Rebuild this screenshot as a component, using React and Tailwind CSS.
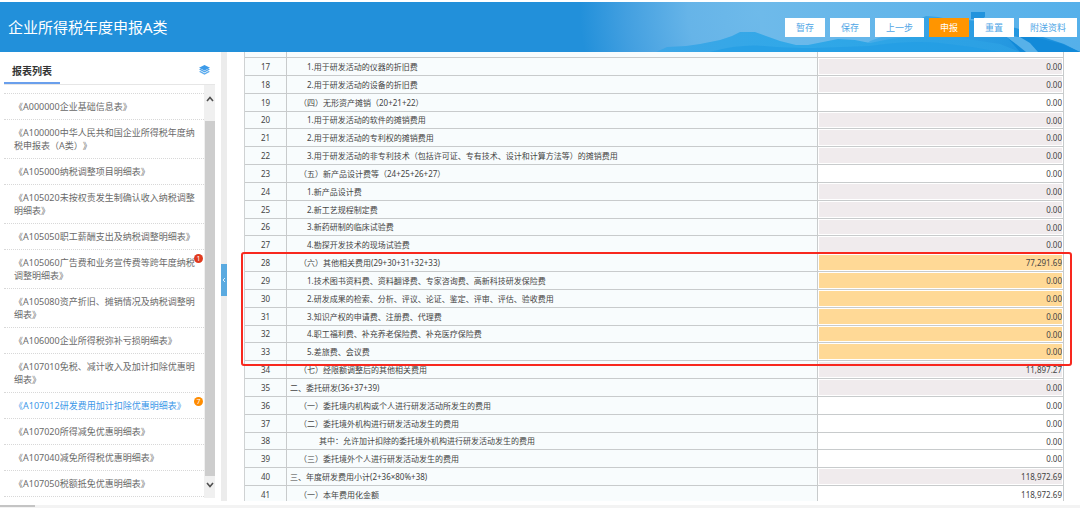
import React, { useState } from 'react';

const actions = [
  { label: '暂存' },
  { label: '保存' },
  { label: '上一步' },
  { label: '申报', primary: true },
  { label: '重置' },
  { label: '附送资料' },
];

const reports = [
  { code: 'A000000', name: '企业基础信息表' },
  { code: 'A100000', name: '中华人民共和国企业所得税年度纳税申报表（A类）' },
  { code: 'A105000', name: '纳税调整项目明细表' },
  { code: 'A105020', name: '未按权责发生制确认收入纳税调整明细表' },
  { code: 'A105050', name: '职工薪酬支出及纳税调整明细表' },
  { code: 'A105060', name: '广告费和业务宣传费等跨年度纳税调整明细表', badge: 1, badgeColor: 'bg-[#e03a1e]' },
  { code: 'A105080', name: '资产折旧、摊销情况及纳税调整明细表' },
  { code: 'A106000', name: '企业所得税弥补亏损明细表' },
  { code: 'A107010', name: '免税、减计收入及加计扣除优惠明细表' },
  { code: 'A107012', name: '研发费用加计扣除优惠明细表', badge: 7, badgeColor: 'bg-[#ff8c00]' },
  { code: 'A107020', name: '所得减免优惠明细表' },
  { code: 'A107040', name: '减免所得税优惠明细表' },
  { code: 'A107050', name: '税额抵免优惠明细表' },
];

// kind: locked = calculated, open = editable, marked = highlighted
const rows = [
  { no: 17, level: 2, name: '1.用于研发活动的仪器的折旧费', value: '0.00', kind: 'locked' },
  { no: 18, level: 2, name: '2.用于研发活动的设备的折旧费', value: '0.00', kind: 'locked' },
  { no: 19, level: 1, name: '（四）无形资产摊销（20+21+22）', value: '0.00', kind: 'open' },
  { no: 20, level: 2, name: '1.用于研发活动的软件的摊销费用', value: '0.00', kind: 'locked' },
  { no: 21, level: 2, name: '2.用于研发活动的专利权的摊销费用', value: '0.00', kind: 'locked' },
  { no: 22, level: 2, name: '3.用于研发活动的非专利技术（包括许可证、专有技术、设计和计算方法等）的摊销费用', value: '0.00', kind: 'locked' },
  { no: 23, level: 1, name: '（五）新产品设计费等（24+25+26+27）', value: '0.00', kind: 'open' },
  { no: 24, level: 2, name: '1.新产品设计费', value: '0.00', kind: 'locked' },
  { no: 25, level: 2, name: '2.新工艺规程制定费', value: '0.00', kind: 'locked' },
  { no: 26, level: 2, name: '3.新药研制的临床试验费', value: '0.00', kind: 'locked' },
  { no: 27, level: 2, name: '4.勘探开发技术的现场试验费', value: '0.00', kind: 'locked' },
  { no: 28, level: 1, name: '（六）其他相关费用(29+30+31+32+33)', value: '77,291.69', kind: 'marked' },
  { no: 29, level: 2, name: '1.技术图书资料费、资料翻译费、专家咨询费、高新科技研发保险费', value: '0.00', kind: 'marked' },
  { no: 30, level: 2, name: '2.研发成果的检索、分析、评议、论证、鉴定、评审、评估、验收费用', value: '0.00', kind: 'marked' },
  { no: 31, level: 2, name: '3.知识产权的申请费、注册费、代理费', value: '0.00', kind: 'marked' },
  { no: 32, level: 2, name: '4.职工福利费、补充养老保险费、补充医疗保险费', value: '0.00', kind: 'marked' },
  { no: 33, level: 2, name: '5.差旅费、会议费', value: '0.00', kind: 'marked' },
  { no: 34, level: 1, name: '（七）经限额调整后的其他相关费用', value: '11,897.27', kind: 'locked' },
  { no: 35, level: 0, name: '二、委托研发(36+37+39)', value: '0.00', kind: 'locked' },
  { no: 36, level: 1, name: '（一）委托境内机构或个人进行研发活动所发生的费用', value: '0.00', kind: 'open' },
  { no: 37, level: 1, name: '（二）委托境外机构进行研发活动发生的费用', value: '0.00', kind: 'open' },
  { no: 38, level: 3, name: '其中：允许加计扣除的委托境外机构进行研发活动发生的费用', value: '0.00', kind: 'open' },
  { no: 39, level: 1, name: '（三）委托境外个人进行研发活动发生的费用', value: '0.00', kind: 'open' },
  { no: 40, level: 0, name: '三、年度研发费用小计(2+36×80%+38)', value: '118,972.69', kind: 'locked' },
  { no: 41, level: 1, name: '（一）本年费用化金额', value: '118,972.69', kind: 'open' },
];

const indent = ['pl-[3px]', 'pl-3', 'pl-5', 'pl-8'];

const kindColor = {
  locked: 'bg-[#f0ebed]',
  open: 'bg-white',
  marked: 'bg-[#ffd996]',
};

const HeaderArt = () => (
  <svg
    className="absolute right-0 top-0 h-full w-[500px]"
    viewBox="0 0 500 50"
    preserveAspectRatio="none"
    aria-hidden="true"
  >
    <defs>
      <radialGradient id="sky" gradientUnits="userSpaceOnUse" cx="180" cy="10" r="180">
        <stop offset="0" stopColor="#6ebaea" />
        <stop offset="0.4" stopColor="#66b4e8" />
        <stop offset="0.75" stopColor="#429fe0" />
        <stop offset="1" stopColor="#2290da" />
      </radialGradient>
      <linearGradient id="skyRight" x1="0" x2="1" y1="0" y2="0">
        <stop offset="0" stopColor="#6ebaea" />
        <stop offset="1" stopColor="#55b0ea" />
      </linearGradient>
      <linearGradient id="hill" x1="0" x2="1" y1="0" y2="0">
        <stop offset="0" stopColor="#3da6e6" />
        <stop offset="0.4" stopColor="#30a8e8" />
        <stop offset="1" stopColor="#2b9fe3" />
      </linearGradient>
      <linearGradient id="ridge" x1="0" x2="1" y1="0" y2="0">
        <stop offset="0" stopColor="#4aaee9" />
        <stop offset="0.5" stopColor="#2c9de2" />
        <stop offset="1" stopColor="#178edc" />
      </linearGradient>
    </defs>
    <rect width="180" height="50" fill="url(#sky)" />
    <rect x="180" width="320" height="50" fill="url(#skyRight)" />
    <path d="M278 50L290 39L310 32L328 22L346 14L358 15L368 17L388 18L406 20L436 26L460 34L484 42L500 50Z" fill="url(#ridge)" />
    <path d="M76 50L87 45L106 44L120 42L140 38L152 34L160 30L175 30L186 34L200 39L216 43L228 43L243 40L258 37L275 38L290 41L310 37L336 34L380 36L420 42L440 50Z" fill="url(#hill)" />
    <path d="M130 50Q160 42 184 44T235 46L290 44Q330 38 360 41T420 50Z" fill="#229de4" opacity="0.7" />
    <path d="M391 10H405V15L402 17H391Z" fill="#2293dd" />
    <path d="M426 34L450 34L482 42L500 50H440Z" fill="#128ad9" />
    <path d="M424 33L440 35L450 41L458 50H446L436 42Z" fill="#6fbdee" opacity="0.75" />
  </svg>
);

const LayersIcon = () => (
  <svg width="11" height="10" viewBox="0 0 22 20" aria-hidden="true">
    <path d="M11 0L22 5.5L11 11L0 5.5Z" fill="#3d9be9" />
    <path d="M0 9L3 7.6L11 11.8L19 7.6L22 9L11 15Z" fill="#4fa5ec" />
    <path d="M0 13.5L3 12.1L11 16.3L19 12.1L22 13.5L11 19.5Z" fill="#5cabed" />
  </svg>
);

const Chevron = ({ d }) => (
  <svg width="8" height="6" viewBox="0 0 8 6" fill="none" stroke="#505050" strokeWidth="1.6" aria-hidden="true">
    <path d={d} />
  </svg>
);

const Header = () => (
  <header className="relative mt-0.5 flex h-[50px] shrink-0 items-center justify-between overflow-hidden bg-[#2290da] pl-2 pr-[3px]">
    <HeaderArt />
    <h1 className="relative text-[15px] text-white">企业所得税年度申报A类</h1>
    <div className="relative flex gap-[5px]">
      {actions.map((action) => (
        <button
          key={action.label}
          type="button"
          className={`h-[19px] px-[11px] text-[9px] leading-[19px] ${
            action.primary ? 'bg-[#ff9500] text-white' : 'bg-white text-[#4fa6e6]'
          }`}
        >
          {action.label}
        </button>
      ))}
    </div>
  </header>
);

const Sidebar = () => {
  const [active, setActive] = useState('A107012');

  return (
    <aside className="ml-1 flex w-[211px] shrink-0 flex-col">
      <div className="flex h-[33px] items-center justify-between border-b border-[#e6e6e6]">
        <h2 className="flex h-8 items-center border-b-2 border-[#6a9fec] px-2 pt-2 text-[10px] font-bold text-[#333]">
          报表列表
        </h2>
        <button type="button" aria-label="展开报表" className="mr-[5px] mt-1">
          <LayersIcon />
        </button>
      </div>
      <div className="flex min-h-0 flex-1">
        <ul className="min-w-0 flex-1 pt-2">
          {reports.map((report) => (
            <li
              key={report.code}
              className="relative border-b border-dotted border-[#d8d8d8] first:border-t"
            >
              <a
                href={`#${report.code}`}
                onClick={() => setActive(report.code)}
                className={`block py-1.5 pl-2.5 pr-1 text-[9px] leading-[13px] ${
                  active === report.code ? 'text-[#3b97e8]' : 'text-[#6a6a6a]'
                }`}
              >
                {`《${report.code}${report.name}》`}
              </a>
              {report.badge && (
                <span
                  className={`absolute right-px top-1 flex size-[9px] items-center justify-center rounded-full text-[7px] leading-none text-white ${report.badgeColor}`}
                >
                  {report.badge}
                </span>
              )}
            </li>
          ))}
        </ul>
        <div className="mb-[3px] flex w-[11px] flex-col items-center bg-[#f0f0f0]">
          <div className="flex h-9 items-center pb-2">
            <Chevron d="M1 5L4 1.5L7 5" />
          </div>
          <div className="w-[10px] flex-1 bg-[#cdcdcd]" />
          <div className="flex h-[22px] items-center pb-1">
            <Chevron d="M1 1L4 4.5L7 1" />
          </div>
        </div>
      </div>
    </aside>
  );
};

const ReportTable = () => (
  <div className="relative">
    <table className="w-full table-fixed border-separate border-spacing-0 border-l border-[#cfd2d3] text-[8px] leading-[10px] text-[#444]">
      <colgroup>
        <col className="w-[42px]" />
        <col />
        <col className="w-[30%]" />
      </colgroup>
      <thead>
        <tr className="h-[6px]">
          <td className="border-b border-r border-[#c8cbcc] bg-[#f8fcfd] p-0" />
          <td className="border-b border-r border-[#c8cbcc] bg-[#f8fcfd] p-0" />
          <td className="border-b border-r border-[#c8cbcc] p-0" />
        </tr>
      </thead>
      <tbody>
        {rows.map((row) => {
          const short = row.no % 6 === 2;
          return (
            <tr key={row.no} className={short ? 'h-[17px]' : 'h-[18px]'}>
              <td className="border-b border-r border-[#c8cbcc] bg-[#f8fcfd] p-0 text-center">{row.no}</td>
              <td className={`whitespace-nowrap border-b border-r border-[#c8cbcc] bg-[#f8fcfd] py-0 pr-0 ${indent[row.level]}`}>
                <label htmlFor={`row-${row.no}`}>{row.name}</label>
              </td>
              <td className="border-b border-r border-[#c8cbcc] bg-white p-px">
                <input
                  id={`row-${row.no}`}
                  type="text"
                  defaultValue={row.value}
                  readOnly={row.kind !== 'open'}
                  className={`block w-full text-right outline-none ${short ? 'h-[14px]' : 'h-[15px]'} ${kindColor[row.kind]}`}
                />
              </td>
            </tr>
          );
        })}
      </tbody>
    </table>
    {/* frame round rows 28-33 */}
    <div className="pointer-events-none absolute -left-[3px] -right-2 top-[200px] h-[114px] rounded-[3px] border-2 border-[#f8281e]" />
  </div>
);

const App = () => {
  return (
    <div className="flex h-screen flex-col overflow-hidden bg-white font-['Noto_Sans','Noto_Sans_CJK_SC',sans-serif] [text-spacing-trim:space-all]">
      <Header />
      <div className="flex min-h-0 flex-1">
        <Sidebar />
        <div className="ml-1.5 flex w-1.5 shrink-0 flex-col bg-[#ececec]">
          <button
            type="button"
            aria-label="收起"
            className="mt-[212px] flex h-8 items-center justify-center bg-[#5aaae0]"
          >
            <svg width="4" height="6" viewBox="0 0 4 6" fill="none" stroke="#fff" strokeWidth="0.8" aria-hidden="true">
              <path d="M3 1L1 3L3 5" />
            </svg>
          </button>
        </div>
        <main className="min-w-0 flex-1 overflow-hidden pl-[17px] pr-4">
          <ReportTable />
        </main>
      </div>
      <div className="mt-1 h-[3px] shrink-0 bg-[#f3f3f3]">
        <div className="h-0.5 w-[35px] bg-[#c4c4c4]" />
      </div>
    </div>
  );
};

export default App;
